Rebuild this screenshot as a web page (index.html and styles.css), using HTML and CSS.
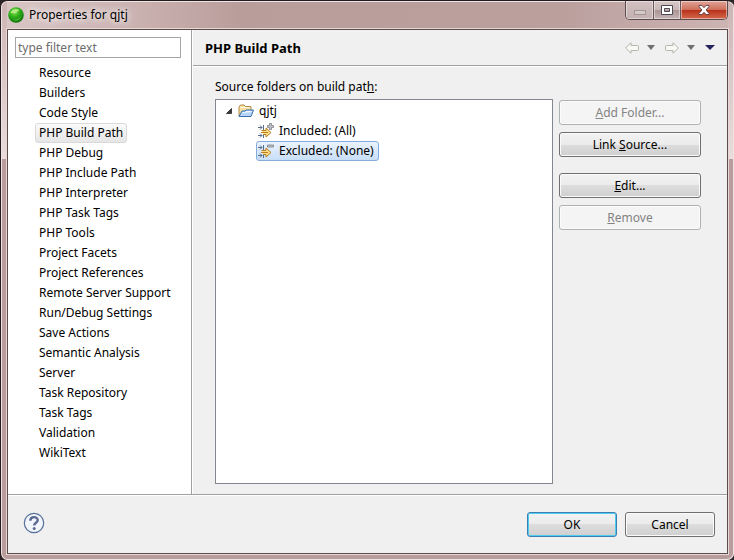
FILE: index.html
```html
<!DOCTYPE html>
<html lang="en">
<head>
<meta charset="utf-8">
<title>Properties for qjtj</title>
<link rel="stylesheet" href="styles.css">
</head>
<body>
<div class="window">
  <header class="titlebar">
    <svg class="app-icon" width="16" height="16" viewBox="0 0 16 16" aria-hidden="true">
      <defs>
        <radialGradient id="ball" cx=".4" cy=".3" r=".75">
          <stop offset="0" stop-color="#9be35c"/>
          <stop offset=".4" stop-color="#35b51c"/>
          <stop offset="1" stop-color="#0a6d0a"/>
        </radialGradient>
      </defs>
      <circle cx="8" cy="8" r="7.8" fill="url(#ball)"/>
      <path d="M2 6.500C3.500 2 9 .8 12 3.200 9.500 3.200 9 6 6.500 6.200 5 6.300 3.500 5.500 2 6.500z" fill="#c5f09a" opacity=".75"/>
      <path d="M5 12.500c3 1 6.500-.5 8-3.500-.5 3.500-5 6-8 3.500z" fill="#7be04a" opacity=".7"/>
    </svg>
    <h1 class="title">Properties for qjtj</h1>
    <div class="caption-buttons">
      <button class="cap cap-min" aria-label="Minimize" disabled>
        <svg width="12" height="5" viewBox="0 0 12 5"><rect x=".5" y=".5" width="11" height="4" fill="#d5caca" stroke="#a39393"/></svg>
      </button>
      <button class="cap cap-max" aria-label="Maximize">
        <svg width="12" height="10" viewBox="0 0 12 10"><path d="M.5.5h11v9H.5zM3.500 3.500h5v3h-5z" fill="#fff" fill-rule="evenodd" stroke="#4d4a56"/></svg>
      </button>
      <button class="cap cap-close" aria-label="Close">
        <svg width="12" height="10" viewBox="0 0 12 10"><path d="M1 .5h3L6 2.700 8 .5h3v1L8 5l3 3.500v1H8L6 7.300 4 9.500H1v-1L4 5 1 1.500z" fill="#fff" stroke="#5b3a42" stroke-width=".9"/></svg>
      </button>
    </div>
  </header>

  <div class="client">
    <div class="main">
      <nav class="sidebar">
        <input class="filter" type="text" placeholder="type filter text" aria-label="Filter pages">
        <ul class="pages">
          <li><a href="#">Resource</a></li>
          <li><a href="#">Builders</a></li>
          <li><a href="#">Code Style</a></li>
          <li><a href="#" class="current" aria-current="page">PHP Build Path</a></li>
          <li><a href="#">PHP Debug</a></li>
          <li><a href="#">PHP Include Path</a></li>
          <li><a href="#">PHP Interpreter</a></li>
          <li><a href="#">PHP Task Tags</a></li>
          <li><a href="#">PHP Tools</a></li>
          <li><a href="#">Project Facets</a></li>
          <li><a href="#">Project References</a></li>
          <li><a href="#">Remote Server Support</a></li>
          <li><a href="#">Run/Debug Settings</a></li>
          <li><a href="#">Save Actions</a></li>
          <li><a href="#">Semantic Analysis</a></li>
          <li><a href="#">Server</a></li>
          <li><a href="#">Task Repository</a></li>
          <li><a href="#">Task Tags</a></li>
          <li><a href="#">Validation</a></li>
          <li><a href="#">WikiText</a></li>
        </ul>
      </nav>

      <section class="page">
        <div class="page-head">
          <h2>PHP Build Path</h2>
          <div class="history">
            <button aria-label="Back" disabled>
              <svg width="14" height="12" viewBox="0 0 14 12"><path d="M.7 6L6 .7v2.800h6.500q1 0 1 1v3q0 1-1 1H6v2.800z" fill="#f8f8f4" stroke="#b5b5ab"/></svg>
            </button>
            <button aria-label="Back history">
              <svg width="8" height="5" viewBox="0 0 8 5"><path d="M0 0h8L4 5z" fill="#6f6f6f"/></svg>
            </button>
            <button aria-label="Forward" disabled>
              <svg width="14" height="12" viewBox="0 0 14 12"><path d="M13.300 6L8 .7v2.800H1.500q-1 0-1 1v3q0 1 1 1H8v2.800z" fill="#f8f8f4" stroke="#b5b5ab"/></svg>
            </button>
            <button aria-label="Forward history">
              <svg width="8" height="5" viewBox="0 0 8 5"><path d="M0 0h8L4 5z" fill="#6f6f6f"/></svg>
            </button>
            <button aria-label="Menu">
              <svg width="10" height="5" viewBox="0 0 10 5"><path d="M0 0h10L5 5z" fill="#25235c"/></svg>
            </button>
          </div>
        </div>

        <div class="page-body">
          <p class="tree-label" id="tree-label">Source folders on build pat<u>h</u>:</p>
          <div class="columns">
            <ul class="tree" role="tree" aria-labelledby="tree-label">
              <li role="treeitem" aria-expanded="true">
                <div class="row">
                  <svg class="twisty" width="6" height="6" viewBox="0 0 6 6"><path d="M5.500.5v5h-5z" fill="#3a3a3a" stroke="#222" stroke-width=".8"/></svg>
                  <span class="node">
                    <svg width="16" height="16" viewBox="0 0 16 16">
                      <path d="M1 13V4l1.500-2H6l1.500 1.500H13V7" fill="#f6dfa0" stroke="#b08a45"/>
                      <path d="M2 4.500h10" stroke="#fff6d8"/>
                      <path d="M1 13.500L4 8h3l1-1h7.500L13 13.500z" fill="#b7d5f5" stroke="#3b6fae"/>
                      <path d="M4 10l.6-1h3l1-1h5.300l-.5 1z" fill="#f3f9ff"/>
                    </svg>
                    qjtj
                  </span>
                </div>
                <ul role="group">
                  <li class="row" role="treeitem">
                    <span class="node">
                      <svg width="16" height="16" viewBox="0 0 16 16">
                        <path d="M0 4.500h4M2 2.500l2 2-2 2M5.500 2v5M0 12.500h4M2 10.500l2 2-2 2M5.500 10v5" fill="none" stroke="#566d8c"/>
                        <path d="M3.500 7.500H8V5l5 4.500L8 14v-2.500H5.500" fill="#ffdf86" stroke="#b97f22"/>
                        <path d="M3 9.500h7" stroke="#b97f22"/>
                        <path d="M11.500.5h2v2h2v2h-2v2h-2v-2h-2v-2h2z" fill="#bfc3c8" stroke="#7d8288" stroke-width=".8"/>
                      </svg>
                      Included: (All)
                    </span>
                  </li>
                  <li class="row" role="treeitem" aria-selected="true">
                    <span class="node selected">
                      <svg width="16" height="16" viewBox="0 0 16 16">
                        <path d="M0 4.500h4M2 2.500l2 2-2 2M5.500 2v5M0 12.500h4M2 10.500l2 2-2 2M5.500 10v5" fill="none" stroke="#566d8c"/>
                        <path d="M3.500 7.500H8V5l5 4.500L8 14v-2.500H5.500" fill="#ffdf86" stroke="#b97f22"/>
                        <path d="M3 9.500h7" stroke="#b97f22"/>
                        <path d="M9.500 2h6v2h-6z" fill="#bfc3c8" stroke="#7d8288" stroke-width=".8"/>
                      </svg>
                      Excluded: (None)
                    </span>
                  </li>
                </ul>
              </li>
            </ul>
            <div class="actions">
              <div class="group">
                <button class="btn" disabled><u>A</u>dd Folder...</button>
                <button class="btn">Link <u>S</u>ource...</button>
              </div>
              <div class="group">
                <button class="btn"><u>E</u>dit...</button>
                <button class="btn" disabled><u>R</u>emove</button>
              </div>
            </div>
          </div>
        </div>
      </section>
    </div>

    <footer class="footer">
      <button class="help" aria-label="Help">
        <svg width="22" height="22" viewBox="0 0 22 22">
          <circle cx="11" cy="11" r="9.700" fill="#f2f5fa" stroke="#56709a" stroke-width="1.200"/>
          <path d="M7.300 8.700C7.300 4 14.700 4 14.700 8.200c0 2.600-3.500 2.600-3.500 5.200" fill="none" stroke="#5a6a92" stroke-width="2.400"/>
          <circle cx="11.200" cy="16.400" r="1.500" fill="#5a6a92"/>
        </svg>
      </button>
      <div class="footer-actions">
        <button class="btn btn-default">OK</button>
        <button class="btn">Cancel</button>
      </div>
    </footer>
  </div>
</div>
</body>
</html>
```

FILE: styles.css
```css
* { box-sizing: border-box; }

body {
  margin: 0;
  background: #2b2426;
  color: #000;
  font: 12px/20px "Noto Sans", "Open Sans", sans-serif;
}

h1, h2, p, ul { margin: 0; padding: 0; }
ul { list-style: none; }
svg { display: block; flex: none; }

button {
  font: inherit;
  color: inherit;
}

.window {
  display: flex;
  flex-direction: column;
  min-height: 100vh;
  padding: 0 6px 6px;
  border-top: 1px solid #231b1d;
  border-left: 1px solid #231b1d;
  border-radius: 7px;
  background:
    linear-gradient(#cdb4b3, #eadcdc 158px, transparent 158px) left / 6px 100% no-repeat,
    linear-gradient(#cdb4b3, #eadcdc 158px, transparent 158px) right / 6px 100% no-repeat,
    linear-gradient(90deg, #d8c6c5, #cbb3b2 130px, #b99d9b 240px, #ba9f9d 560px, #cdb5b4) top / 100% 30px no-repeat,
    #b99d9c;
  box-shadow: inset 0 0 0 1px #efe4e4;
}

.titlebar {
  display: flex;
  align-items: flex-start;
  height: 28px;
}

.app-icon { margin: 6px 5px 0 1px; }

.title {
  flex: 1;
  padding-top: 4px;
  font-size: 12px;
  font-weight: 400;
  text-shadow: 0 0 6px #fff, 0 0 10px #fff;
}

.caption-buttons {
  display: flex;
  border: 1px solid #5b4a4e;
  border-top: 0;
  border-radius: 0 0 5px 5px;
  overflow: hidden;
}

.cap {
  display: flex;
  align-items: center;
  justify-content: center;
  width: 28px;
  height: 18px;
  padding: 0;
  border: 0;
  border-right: 1px solid #6b575b;
  background: linear-gradient(#d8c8c8, #c9b6b6 50%, #a99393 50%, #c6b4b4);
  box-shadow: inset 0 0 0 1px rgb(255 255 255 / 45%);
}

.cap-min { background: linear-gradient(#d3c1c1, #c3b0b0); }
.cap-min svg { margin-top: 5px; }
.cap-max { width: 27px; }

.cap-close {
  width: 46px;
  border-right: 0;
  background: linear-gradient(#e0a497, #cf6f5b 48%, #b8301a 50%, #d4694c);
}

.client {
  display: flex;
  flex: 1;
  flex-direction: column;
  border: 1px solid #5d4b4b;
  background: #f0f0f0;
  box-shadow: 0 0 0 1px #e5d8d7;
}

.main {
  display: flex;
  flex: 1;
  border-bottom: 1px solid #a0a0a0;
}

.sidebar {
  flex: none;
  width: 184px;
  padding: 7px 10px 7px 7px;
  border-right: 1px solid #a0a0a0;
  background: #fff;
}

.filter {
  display: block;
  width: 100%;
  height: 21px;
  margin-bottom: 5px;
  padding: 0 2px;
  border: 1px solid #a5a5a5;
  background: #fff;
  font: inherit;
}

.filter::placeholder { color: #6d6d6d; }

.pages { padding-left: 20px; }
.pages li { display: flex; }

.pages a {
  padding: 0 3px;
  border: 1px solid transparent;
  border-radius: 3px;
  color: inherit;
  line-height: 18px;
  text-decoration: none;
  white-space: nowrap;
}

.pages .current {
  border-color: #d9d9d9;
  background: linear-gradient(#fafafa, #e6e6e6);
}

.page {
  display: flex;
  flex: 1;
  flex-direction: column;
  border-left: 1px solid #fff;
}

.page-head {
  display: flex;
  align-items: center;
  justify-content: space-between;
  height: 36px;
  padding: 0 12px;
  border-bottom: 1px solid #a0a0a0;
}

.page-head h2 {
  font-size: 13px;
  font-weight: 700;
  line-height: 20px;
}

.history {
  display: flex;
  align-items: center;
  gap: 10px;
}

.history button {
  padding: 0;
  border: 0;
  background: none;
}

.history button:nth-child(even) { margin-left: -2px; }

.page-body {
  display: flex;
  flex: 1;
  flex-direction: column;
  padding: 10px 26px 10px 22px;
  border-top: 1px solid #fff;
}

.tree-label { margin-bottom: 2px; }

.columns {
  display: flex;
  flex: 1;
  gap: 6px;
}

.tree {
  flex: 1;
  padding: 1px 10px;
  border: 1px solid #828790;
  background: #fff;
}

.tree ul { padding-left: 30px; }

.row {
  display: flex;
  align-items: center;
}

.twisty { margin-right: 4px; }

.node {
  display: flex;
  align-items: center;
  gap: 5px;
  height: 20px;
  padding: 0 4px 0 1px;
  border: 1px solid transparent;
  border-radius: 3px;
  line-height: 18px;
}

.selected {
  border-color: #84acdd;
  background: linear-gradient(#eaf3fe, #c8def8);
}

.actions {
  display: flex;
  flex-direction: column;
  gap: 16px;
  width: 142px;
  padding-top: 1px;
}

.group {
  display: flex;
  flex-direction: column;
  gap: 7px;
}

.btn {
  height: 25px;
  padding: 0 8px;
  border: 1px solid #707070;
  border-radius: 3px;
  background: linear-gradient(#f2f2f2, #ebebeb 50%, #dddddd 50%, #cfcfcf);
  box-shadow: inset 0 0 0 1px #fbfbfb;
  line-height: 20px;
}

.btn:disabled {
  border-color: #adb2b5;
  background: #f4f4f4;
  color: #838383;
}

.btn-default {
  border-color: #3c7fb1;
  box-shadow: inset 0 0 0 1px #4fcdf0;
}

.footer {
  display: flex;
  align-items: flex-start;
  justify-content: space-between;
  padding: 16px 12px 16px 15px;
  border-top: 1px solid #fff;
}

.help {
  padding: 0;
  border: 0;
  background: none;
}

.footer-actions {
  display: flex;
  gap: 8px;
}

.footer-actions .btn { width: 90px; }
```
